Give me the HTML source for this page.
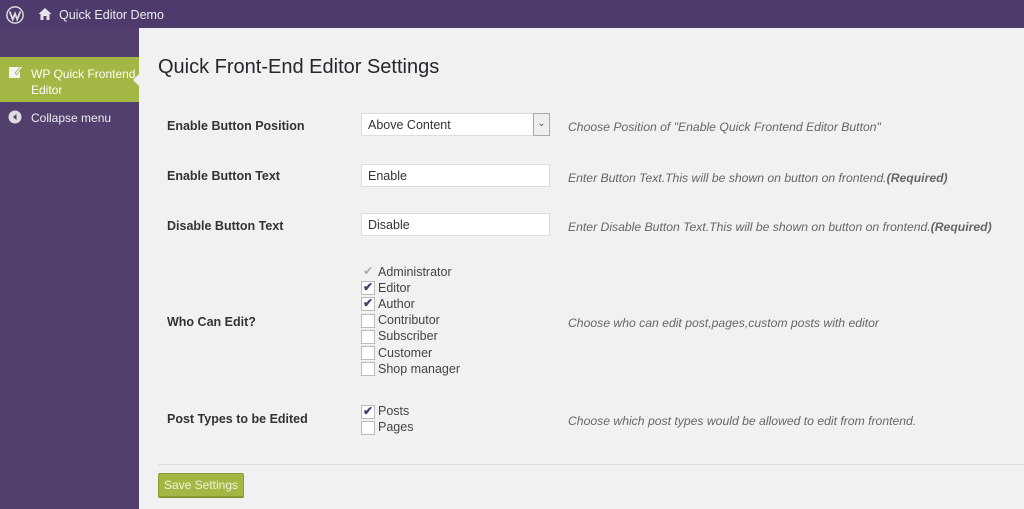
<!DOCTYPE html><html><head><style>
*{margin:0;padding:0;box-sizing:border-box}
body{width:1024px;height:509px;overflow:hidden;background:#f1f1f1;font-family:"Liberation Sans",sans-serif;font-size:13px;color:#444;position:relative}
.a{position:absolute;white-space:nowrap}
.top{left:0;top:0;width:1024px;height:28px;background:#4e3a6c}
.side{left:0;top:28px;width:139px;height:481px;background:#523f6d}
.lbl{left:167px;font-weight:bold;font-size:12.5px;color:#333}
.desc{left:568px;font-style:italic;font-size:12.2px;color:#666}
.inp{left:361px;width:189px;height:23px;background:#fff;border:1px solid #ddd;font-size:12.5px;padding:4px 6px;color:#333}
.cb{left:361px;width:14px;height:14px;background:#fff;border:1px solid #bbb}
.cl{left:378px;font-size:12.5px;color:#444}
.ck{position:absolute;left:1px;top:-2px;color:#4e3a6c;font-size:12px;font-weight:bold}
</style></head><body>
<div class="a top"></div>
<svg class="a" style="left:6px;top:6px" width="18" height="18" viewBox="0 0 20 20"><circle cx="10" cy="10" r="9" fill="none" stroke="#ddd" stroke-width="1.6"/><path d="M4 6l3.5 9 2.5-6.5 2.5 6.5L16 6" fill="none" stroke="#ddd" stroke-width="2"/></svg>
<svg class="a" style="left:38px;top:7px" width="14" height="14" viewBox="0 0 14 14"><path d="M7 1L0.5 7H2.5V13H5.5V9H8.5V13H11.5V7H13.5Z" fill="#e8e4ee"/></svg>
<div class="a" style="left:59px;top:8px;color:#eee;font-size:12.5px">Quick Editor Demo</div>
<div class="a side"></div>
<div class="a" style="left:0;top:57px;width:139px;height:45px;background:#a3b745"></div>
<div class="a" style="left:133px;top:73px;width:0;height:0;border-top:7px solid transparent;border-bottom:7px solid transparent;border-right:7px solid #f1f1f1"></div>
<svg class="a" style="left:8px;top:64px" width="15" height="15" viewBox="0 0 15 15"><rect x="1" y="3" width="11" height="11" fill="#f3f3f3"/><path d="M7 9l6-7 1.5 1.5-6 7z" fill="#f3f3f3" stroke="#a3b745" stroke-width=".8"/></svg>
<div class="a" style="left:31px;top:66px;color:#fff;font-size:12px;line-height:16px">WP Quick Frontend<br>Editor</div>
<svg class="a" style="left:8px;top:110px" width="14" height="14" viewBox="0 0 14 14"><circle cx="7" cy="7" r="6.5" fill="#ddd"/><path d="M8.5 4L5 7l3.5 3z" fill="#523f6d"/></svg>
<div class="a" style="left:31px;top:111px;color:#eee;font-size:12px">Collapse menu</div>

<div class="a" style="left:158px;top:56px;font-size:20px;color:#23282d">Quick Front-End Editor Settings</div>

<div class="a lbl" style="top:119px">Enable Button Position</div>
<div class="a inp" style="top:113px;width:189px">Above Content</div>
<div class="a" style="left:533px;top:113px;width:17px;height:23px;background:#eee;border:1px solid #aaa;font-size:10px;text-align:center;line-height:19px;color:#555">&#8964;</div>
<div class="a desc" style="top:120px">Choose Position of "Enable Quick Frontend Editor Button"</div>

<div class="a lbl" style="top:169px">Enable Button Text</div>
<div class="a inp" style="top:164px">Enable</div>
<div class="a desc" style="top:171px">Enter Button Text.This will be shown on button on frontend.<b>(Required)</b></div>

<div class="a lbl" style="top:219px">Disable Button Text</div>
<div class="a inp" style="top:213px">Disable</div>
<div class="a desc" style="top:220px">Enter Disable Button Text.This will be shown on button on frontend.<b>(Required)</b></div>

<div class="a" style="left:363px;top:264px;color:#aaa;font-size:12px">&#10004;</div>
<div class="a cl" style="top:265px">Administrator</div>
<div class="a cb" style="top:281px"><span class="ck">&#10004;</span></div><div class="a cl" style="top:281px">Editor</div>
<div class="a cb" style="top:297px"><span class="ck">&#10004;</span></div><div class="a cl" style="top:297px">Author</div>
<div class="a cb" style="top:314px"></div><div class="a cl" style="top:313px">Contributor</div>
<div class="a cb" style="top:330px"></div><div class="a cl" style="top:329px">Subscriber</div>
<div class="a cb" style="top:346px"></div><div class="a cl" style="top:346px">Customer</div>
<div class="a cb" style="top:362px"></div><div class="a cl" style="top:362px">Shop manager</div>
<div class="a lbl" style="top:315px">Who Can Edit?</div>
<div class="a desc" style="top:316px">Choose who can edit post,pages,custom posts with editor</div>

<div class="a lbl" style="top:412px">Post Types to be Edited</div>
<div class="a cb" style="top:405px"><span class="ck">&#10004;</span></div><div class="a cl" style="top:404px">Posts</div>
<div class="a cb" style="top:421px"></div><div class="a cl" style="top:420px">Pages</div>
<div class="a desc" style="top:414px">Choose which post types would be allowed to edit from frontend.</div>

<div class="a" style="left:158px;top:464px;width:866px;height:1px;background:#ddd"></div>
<div class="a" style="left:158px;top:473px;width:86px;height:24px;background:#a3b745;border:1px solid #8a9c34;border-radius:2px;color:#eef3d8;font-size:12px;text-align:center;line-height:22px;box-shadow:0 1px 0 #7d8f2c">Save Settings</div>
</body></html>
